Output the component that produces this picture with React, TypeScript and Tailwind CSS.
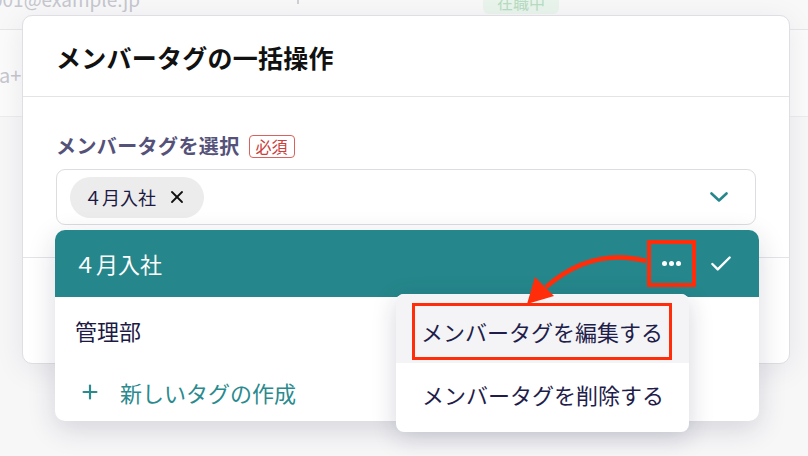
import { Check, Plus, X } from "lucide-react";

const font = { fontFamily: '"Noto Sans CJK JP", "Noto Sans", sans-serif' };

function ChevronDown() {
  return (
    <svg width="18" height="10" viewBox="0 0 18 10" fill="none">
      <path d="M1.5 1.5L9 8.5L16.5 1.5" stroke="#25878b" strokeWidth="2.6" strokeLinecap="round" strokeLinejoin="round" />
    </svg>
  );
}

export default function App() {
  return (
    <div
      className="relative w-[808px] h-[456px] overflow-hidden bg-[#f8f8f9] flex flex-col"
      style={font}
    >
      {/* Background table (dimmed) */}
      <div className="h-[30px] border-b border-[#e6e6ea] flex items-start text-[#c6c6ce] text-[19px]">
        <span className="-ml-[8px] -mt-[14px] leading-[26px]">001@example.jp</span>
        <span className="ml-[157px] -mt-[10px] w-[2px] h-[14px] bg-[#cfcfd6]" />
        <span className="ml-[184px] -mt-[10px] h-[24px] px-[14px] rounded-md bg-[#e9f5ec] text-[#b7dcc2] text-[16px] leading-[24px]">
          在職中
        </span>
      </div>
      <div className="h-[87px] border-b border-[#ececef] bg-[#fbfbfb] flex items-center text-[#c6c6ce] text-[20px]">
        <span className="-ml-[1px] mt-[4px]">a+</span>
      </div>
      <div className="flex-1 bg-[#f7f7f8]" />

      {/* Modal */}
      <div className="absolute left-[22px] top-[15px] w-[768px] h-[349px] bg-white rounded-[10px] border border-[#dedee3] shadow-[0_6px_30px_rgba(30,30,60,0.08)] flex flex-col">
        <div className="h-[81px] border-b border-[#e3e3e8] flex items-center px-[33px] pt-[4px]">
          <h1 className="text-[25px] font-bold text-[#111] tracking-[0.01em]">メンバータグの一括操作</h1>
        </div>
        <div className="px-[33px] pt-[37px]">
          <div className="flex items-center gap-[9px] h-[24px]">
            <span className="text-[20px] font-bold text-[#55527a] leading-[24px] tracking-[0.02em]">メンバータグを選択</span>
            <span className="h-[23px] px-[6px] rounded-[4px] border border-[#d9625e] text-[#c9403d] text-[16px] leading-[21px]">
              必須
            </span>
          </div>
          <div className="mt-[11px] h-[56px] rounded-[9px] border border-[#dcdce2] flex items-center pl-[13px] pr-[27px]">
            <div className="h-[41px] rounded-full bg-[#ececec] flex items-center gap-[11px] pl-[14px] pr-[17px] text-[18px] text-[#1c1a45]">
              <span>４月入社</span>
              <X size={20} strokeWidth={2.2} className="text-[#111]" />
            </div>
            <div className="ml-auto">
              <ChevronDown />
            </div>
          </div>
        </div>
        <div className="mt-[32px] border-t border-[#e3e3e8]" />
      </div>

      {/* Dropdown list */}
      <div className="absolute left-[55px] top-[230px] w-[704px] rounded-[10px] bg-white shadow-[0_8px_28px_rgba(30,30,70,0.16)] overflow-hidden flex flex-col text-[22px]">
        <div className="h-[67px] bg-[#25878b] flex items-center pl-[19px] pr-[25px] text-white">
          <span>４月入社</span>
          <div className="ml-auto w-[49px] h-[47px] border-[4px] border-[#ff2d0a] flex items-center justify-center gap-[2px]">
            <span className="w-[5px] h-[5px] rounded-full bg-white" />
            <span className="w-[5px] h-[5px] rounded-full bg-white" />
            <span className="w-[5px] h-[5px] rounded-full bg-white" />
          </div>
          <Check size={26} strokeWidth={2.2} className="ml-[12px]" />
        </div>
        <div className="h-[66px] flex items-center pl-[20px] text-[#1c1a45]">管理部</div>
        <div className="h-[58px] flex items-center pl-[24px] gap-[19px] text-[#2a8a8e]">
          <Plus size={22} strokeWidth={2.4} />
          <span>新しいタグの作成</span>
        </div>
      </div>

      {/* Context menu */}
      <div className="absolute left-[396px] top-[294px] w-[293px] rounded-[8px] bg-white shadow-[0_6px_24px_rgba(30,30,70,0.18)] flex flex-col text-[22px] text-[#1f1d4a] pb-[6px]">
        <div className="h-[69px] bg-[#f4f4f6] rounded-t-[8px] pl-[16px] pt-[9px]">
          <div className="w-[260px] h-[57px] border-[3px] border-[#ff2d0a] pl-[6px] flex items-center">
            メンバータグを編集する
          </div>
        </div>
        <div className="h-[63px] flex items-center pl-[26px]">メンバータグを削除する</div>
      </div>

      {/* Annotation arrow */}
      <svg className="absolute left-0 top-0 pointer-events-none" width="808" height="456" viewBox="0 0 808 456">
        <path d="M646 261 Q 592 247 546 287" stroke="#ff2d0a" strokeWidth="4.5" fill="none" />
        <polygon points="527,304 535,277 554,296" fill="#ff2d0a" />
      </svg>
    </div>
  );
}
